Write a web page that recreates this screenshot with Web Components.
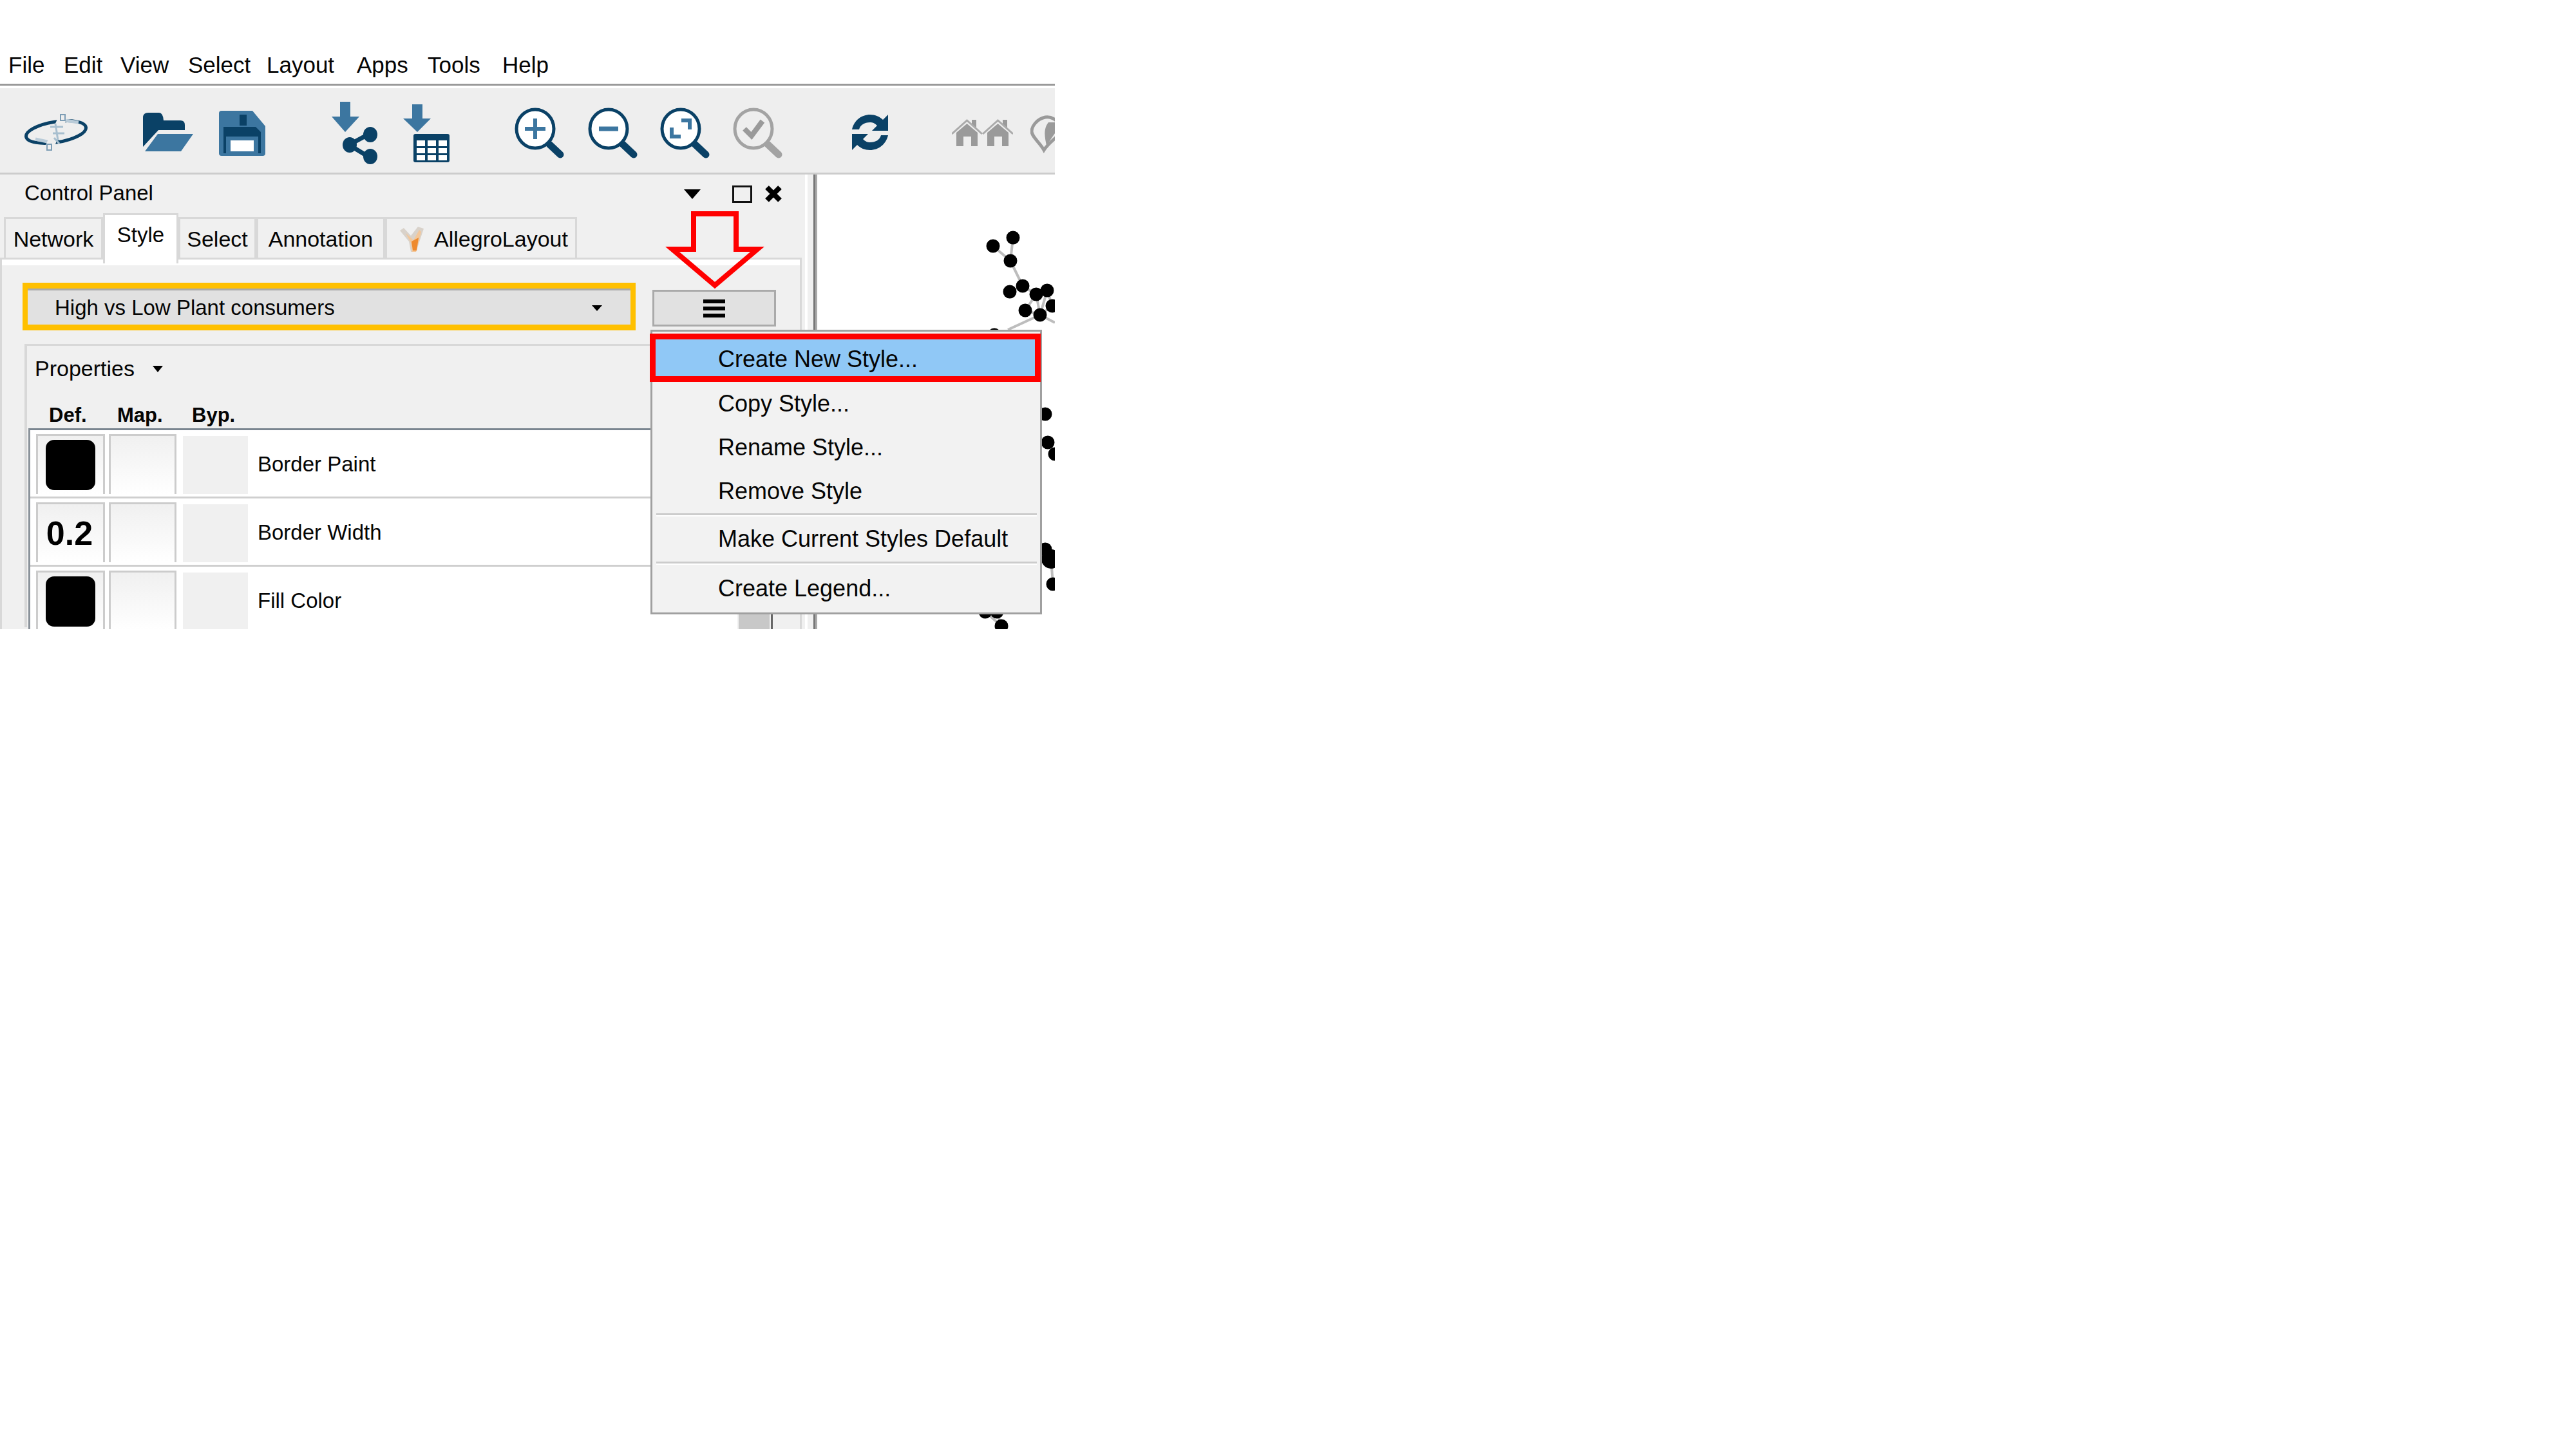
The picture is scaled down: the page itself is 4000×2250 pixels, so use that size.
<!DOCTYPE html>
<html><head><meta charset="utf-8"><title>Cytoscape Style menu</title>
<style>html,body{margin:0;padding:0;background:#fff}</style></head>
<body>
<cy-app>
  <cy-menubar>
    <cy-menu-label style="width:86px">File</cy-menu-label>
    <cy-menu-label style="width:88px">Edit</cy-menu-label>
    <cy-menu-label style="width:105px">View</cy-menu-label>
    <cy-menu-label style="width:122px">Select</cy-menu-label>
    <cy-menu-label style="width:140px">Layout</cy-menu-label>
    <cy-menu-label style="width:110px">Apps</cy-menu-label>
    <cy-menu-label style="width:116px">Tools</cy-menu-label>
    <cy-menu-label style="width:90px">Help</cy-menu-label>
  </cy-menubar>
  <cy-toolbar></cy-toolbar>
  <cy-main>
    <cy-control-panel>
      <cy-panel-title>Control Panel</cy-panel-title>
      <cy-tabs>
        <cy-tab style="width:154px">Network</cy-tab>
        <cy-tab active style="width:117px">Style</cy-tab>
        <cy-tab style="width:121px">Select</cy-tab>
        <cy-tab style="width:200px">Annotation</cy-tab>
        <cy-tab allegro style="width:298px">AllegroLayout</cy-tab>
      </cy-tabs>
      <cy-style-pane>
        <cy-style-picker>High vs Low Plant consumers</cy-style-picker>
        <cy-props>
          <cy-prop-row swatch>Border Paint</cy-prop-row>
          <cy-prop-row value="0.2">Border Width</cy-prop-row>
          <cy-prop-row swatch>Fill Color</cy-prop-row>
        </cy-props>
      </cy-style-pane>
    </cy-control-panel>
    <cy-divider></cy-divider>
    <cy-network></cy-network>
  </cy-main>
  <cy-callout></cy-callout>
  <cy-popup>
    <cy-item selected>Create New Style...</cy-item>
    <cy-item>Copy Style...</cy-item>
    <cy-item>Rename Style...</cy-item>
    <cy-item>Remove Style</cy-item>
    <cy-sep></cy-sep>
    <cy-item h="70">Make Current Styles Default</cy-item>
    <cy-sep></cy-sep>
    <cy-item h="74">Create Legend...</cy-item>
  </cy-popup>
</cy-app>
<script>
const FONT='"Liberation Sans",Arial,sans-serif';
const def=(name,css,html,init)=>customElements.define(name,class extends HTMLElement{
  constructor(){super();this.attachShadow({mode:'open'}).innerHTML='<style>'+css+'</style>'+(typeof html==='function'?html(this):html);}
  connectedCallback(){if(init)init.call(this);}
});
const D='#0a4166',M='#3c76a0',G='#9a9a9a';
const lens=(cx,color,inner)=>`<ellipse cx="${cx}" cy="200" rx="29" ry="30" fill="#fff" stroke="${color}" stroke-width="5"/><line x1="${cx+22}" y1="224" x2="${cx+39}" y2="240" stroke="${color}" stroke-width="11" stroke-linecap="round"/>${inner}`;
const house=x=>`<path d="M${x+7} 206L${x+23.5} 192L${x+40} 206V227H${x+30}V212H${x+18}V227H${x+7}Z" fill="${G}"/><path d="M${x+31} 194V186H${x+38}V201Z" fill="${G}"/><path d="M${x} 208L${x+23.5} 187L${x+47} 208" fill="none" stroke="#aaa" stroke-width="3"/>`;
const refreshHalf=`<path d="M1323 201C1326 187 1338 178 1351 178C1359 178 1366 181 1371 186L1379 178V203H1354L1362 195C1358 191 1355 190 1351 190C1342 190 1336 194 1334 201Z" fill="${D}"/>`;
const TOOLS=[
 [37,138,`<ellipse cx="87" cy="205" rx="47" ry="16" transform="rotate(-9 87 205)" fill="none" stroke="${D}" stroke-width="5"/><path d="M55 216L78 221M102 187L122 190" stroke="#b9cbd8" stroke-width="5" fill="none"/><line x1="98" y1="181" x2="76" y2="230" stroke="#eeeeee" stroke-width="13"/><rect x="94" y="178" width="7" height="9" fill="#eee" stroke="#7d9db5" stroke-width="2"/><rect x="73" y="224" width="7" height="9" fill="#eee" stroke="#7d9db5" stroke-width="2"/><path d="M78 197h20M82 207h18M86 192l4 26M84 214l8 9" stroke="#a8bfcf" stroke-width="3" fill="none"/>`],
 [222,301,`<path d="M222 183Q222 175 230 175H247Q253 175 254 187H280Q287 187 287 194V202H246L222 228Z" fill="${D}"/><path d="M245 208H300L281 235H225Z" fill="${M}"/>`],
 [340,412,`<path d="M344 172H392L412 196V238Q412 242 408 242H344Q340 242 340 238V176Q340 172 344 172Z" fill="${M}"/><rect x="372" y="178" width="11" height="17" fill="${D}"/><path d="M347 197H397L405 205V238H347Z" fill="${D}"/><rect x="351" y="212" width="50" height="30" fill="${M}"/><rect x="358" y="218" width="36" height="17" fill="#fff"/>`],
 [515,590,`<path d="M528 158H544V181H558L536 205L515 181H528Z" fill="${M}"/><path d="M575 207L542 225L575 245" fill="none" stroke="${D}" stroke-width="7"/><ellipse cx="575" cy="209" rx="11" ry="12" fill="${D}"/><ellipse cx="543" cy="225" rx="11" ry="12" fill="${D}"/><ellipse cx="575" cy="243" rx="11" ry="12" fill="${D}"/>`],
 [626,699,`<path d="M640 162H656V184H669L648 205L626 184H640Z" fill="${M}"/><rect x="642" y="208" width="56" height="44" rx="3" fill="${D}"/><g fill="#fff"><rect x="647" y="218" width="13" height="9"/><rect x="664" y="218" width="13" height="9"/><rect x="681" y="218" width="13" height="9"/><rect x="647" y="230" width="13" height="8"/><rect x="664" y="230" width="13" height="8"/><rect x="681" y="230" width="13" height="8"/><rect x="647" y="241" width="13" height="8"/><rect x="664" y="241" width="13" height="8"/><rect x="681" y="241" width="13" height="8"/></g>`],
 [798,876,lens(831,D,`<path d="M815 200H847M831 184V216" stroke="${M}" stroke-width="6"/>`)],
 [912,990,lens(945,D,`<path d="M930 200H960" stroke="${M}" stroke-width="7"/>`)],
 [1024,1103,lens(1057,D,`<path d="M1058 187H1071V201M1043 198V212H1057" fill="none" stroke="${M}" stroke-width="6"/>`)],
 [1137,1215,lens(1170,'#a3a3a3',`<path d="M1156 200L1167 211L1184 188" fill="none" stroke="${G}" stroke-width="8"/>`).replace('fill="#fff"','fill="#eeeeee"')],
 [1323,1379,refreshHalf+`<g transform="rotate(180 1351 205.5)">${refreshHalf}</g>`],
 [1478,1573,house(1478)+house(1526)],
 [1600,1660,`<path d="M1623 182C1609 185 1602 197 1602 204C1602 212 1615 222 1621 233C1628 222 1640 214 1650 204C1648 192 1636 180 1623 182Z" fill="none" stroke="${G}" stroke-width="5"/><path d="M1628 190C1620 200 1622 212 1625 226L1640 204L1640 190Z" fill="${G}"/>`]
];
def('cy-app',`:host{display:flex;flex-direction:column;width:1638px;height:977px;position:relative;overflow:hidden;font:33px ${FONT};color:#050505;background:#fff}`,'<slot></slot>');
def('cy-menubar',`:host{display:flex;box-sizing:border-box;height:137px;padding:81px 0 0 13px;background:#fff;border-bottom:4px solid #fff;box-shadow:inset 0 -3px 0 #999;flex:none}`,'<slot></slot>');
def('cy-menu-label',`:host{display:block;font-size:35px;line-height:40px;white-space:nowrap}`,'<slot></slot>');
def('cy-toolbar',`:host{display:flex;height:131px;background:#eeeeee;border-bottom:3px solid #cccccc;flex:none;overflow:hidden}svg{display:block;flex:none;height:131px}`,()=>{
  let prev=0;return TOOLS.map(([a,b,s])=>{const m=a-prev;prev=b;return `<svg style="margin-left:${m}px" width="${b-a}" viewBox="${a} 137 ${b-a} 131">${s}</svg>`}).join('');
});
def('cy-main',`:host{display:flex;flex:1;min-height:0}`,'<slot></slot>');
def('cy-control-panel',`:host{display:block;width:1263px;flex:none;overflow:hidden;background:linear-gradient(to right,#f0f0f0 1250px,#fff 1250px,#fff 1254px,#f0f0f0 1254px)}`,'<slot></slot>');
def('cy-panel-title',`:host{display:flex;align-items:center;height:60px;padding-left:38px;box-sizing:border-box}
 .t{flex:1;padding-bottom:3px}.i{display:block;flex:none}`,
 `<span class="t"><slot></slot></span>
 <svg class="i" width="26" height="15" viewBox="0 0 26 15" style="margin-right:49px"><path d="M0 0H26L13 15Z" fill="#000"/></svg>
 <svg class="i" width="31" height="27" viewBox="0 0 31 27" style="margin-right:19px"><rect x="1.5" y="1.5" width="28" height="24" fill="none" stroke="#111" stroke-width="3"/></svg>
 <svg class="i" width="28" height="26" viewBox="0 0 28 26" style="margin-right:48px"><path d="M4 3L24 23M24 3L4 23" stroke="#000" stroke-width="8"/></svg>`);
def('cy-tabs',`:host{display:flex;align-items:flex-end;height:69px;padding-left:6px;box-sizing:border-box;position:relative;z-index:1}`,'<slot></slot>');
def('cy-tab',`:host{display:flex;box-sizing:border-box;align-items:center;justify-content:center;height:63px;background:#f0f0f0;border:3px solid #d8d8d8;border-bottom:0;white-space:nowrap;font-size:34px;padding-top:3px}
 :host([active]){height:78px;margin-bottom:-9px;background:#fff;border-bottom:0;padding-bottom:13px;padding-top:0;font-size:33px}
 svg{display:none;margin-right:12px;flex:none}:host([allegro]) svg{display:block}:host([allegro]){padding-left:6px}`,
 `<svg width="44" height="42" viewBox="0 0 44 42"><path d="M3 7L9 3L20 15L31 1L40 4L28 40H20L17 24Z" fill="#d9d2ca"/><path d="M12 11L24 22L33 6L36 9L28 40H22L20 26Z" fill="#f3c79a"/><path d="M21 24L32 18L29 38H23Z" fill="#ee8a2e"/></svg><slot></slot>`);
def('cy-style-pane',`:host{display:block;box-sizing:border-box;width:1245px;height:577px;border:3px solid #d8d8d8;border-bottom:0;background:linear-gradient(#fff 9px,#f0f0f0 9px);padding:36px 0 0 32px;overflow:hidden;position:relative}`,'<slot></slot>');
def('cy-style-picker',`:host{display:flex;align-items:flex-start}
 .combo{box-sizing:border-box;width:952px;height:74px;border:solid #ffc000;border-width:9px 8px;background:#e1e1e1;box-shadow:inset 0 3px 0 #aaa;display:flex;align-items:center;padding-left:42px;white-space:nowrap;padding-top:3px}
 .txt{flex:1}.arrow{width:0;height:0;border:8px solid transparent;border-top:9px solid #000;border-bottom:0;margin-right:44px;margin-top:2px}
 .btn{box-sizing:border-box;width:192px;height:57px;margin:11px 0 0 26px;border:3px solid #aaa;background:#e1e1e1;display:flex;flex-direction:column;align-items:center;justify-content:center;gap:5px}
 .btn i{display:block;width:34px;height:6px;background:#000}`,
 `<div class="combo"><span class="txt"><slot></slot></span><span class="arrow"></span></div><div class="btn"><i></i><i></i><i></i></div>`);
def('cy-props',`:host{display:block;box-sizing:border-box;margin:21px 0 0 3px;width:1200px;height:440px;border-top:3px solid #d8d8d8;border-left:4px solid #d8d8d8;font-size:33px}
 .head{display:flex;align-items:center;height:70px;padding-left:12px;box-sizing:border-box}
 .head b{font-weight:normal;font-size:34px}
 .tri{width:0;height:0;border:8px solid transparent;border-top:10px solid #000;border-bottom:0;margin-left:28px;margin-top:2px}
 .cols{display:flex;box-sizing:border-box;height:58px;padding:22px 0 0 34px;font-weight:bold;font-size:31px;line-height:32px}
 .cols span{display:block}
 .table{margin-left:2px;width:1156px;border-top:3px solid #7a8590;border-left:3px solid #8a929a;border-right:3px solid #666;display:flex;height:320px;box-sizing:border-box}
 .rows{flex:1;background:#fff;min-width:0}.bar{width:52px;flex:none;background:#f0f0f0;padding:0 2px;box-sizing:border-box}.bar i{display:block;height:100%;background:#c8c8c8}`,
 `<div class="head"><b>Properties</b><span class="tri"></span></div>
 <div class="cols"><span style="width:106px">Def.</span><span style="width:116px">Map.</span><span>Byp.</span></div>
 <div class="table"><div class="rows"><slot></slot></div><div class="bar"><i></i></div></div>`);
def('cy-prop-row',`:host{display:flex;box-sizing:border-box;height:106px;padding:6px 0 4px 9px;border-bottom:3px solid #cfcfcf;align-items:stretch;font-size:33px}
 .c{box-sizing:border-box;height:93px;flex:none;display:flex;align-items:center;justify-content:center}
 .b{border:3px solid #cccccc;border-bottom:0;background:linear-gradient(#f0f0f0,#fff)}
 .d{width:107px;margin-right:6px}.m{width:105px;margin-right:10px}.y{width:101px;background:linear-gradient(#fff 3px,#f0f0f0 3px);margin-right:15px}
 .s{display:block;width:77px;height:78px;background:#000;border-radius:13px}
 .v{font:bold 52px/1 ${FONT};color:#000;margin-right:3px}.l{align-self:center;white-space:nowrap}`,
 h=>{const val=h.getAttribute('value');return `<div class="c b d">${val?`<span class="v">${val}</span>`:'<span class="s"></span>'}</div><div class="c b m"></div><div class="c y"></div><span class="l"><slot></slot></span>`});
def('cy-divider',`:host{display:block;width:6px;flex:none;background:linear-gradient(to right,#777 3px,#aaa 3px)}`,'');
const NODES=[[1542,382],[1573,369],[1569,405],[1588,444],[1568,453],[1609,457],[1626,451],[1634,475],[1592,482],[1615,489],[1623,643],[1627,687],[1638,705],[1623,853],[1632,868],[1635,907],[1555,972],[1530,950],[1548,950],[1544,520]];
const EDGES=[[0,2],[1,2],[2,3],[3,5],[4,3],[5,6],[5,9],[6,9],[6,7],[8,9],[8,5],[7,9],[11,12],[14,15],[16,17],[16,18]];
def('cy-network',`:host{display:block;flex:1;min-width:0;overflow:hidden;background:#fff}svg{display:block}`,
 ()=>`<svg width="369" height="706" viewBox="1269 271 369 706"><g stroke="#bdbdbd" stroke-width="4">${EDGES.map(([a,b])=>`<line x1="${NODES[a][0]}" y1="${NODES[a][1]}" x2="${NODES[b][0]}" y2="${NODES[b][1]}"/>`).join('')}<line x1="1615" y1="489" x2="1565" y2="512"/><line x1="1615" y1="489" x2="1638" y2="501"/></g><g fill="#000">${NODES.map(([x,y],i)=>`<circle cx="${x}" cy="${y}" r="${i==14?15:10.5}"/>`).join('')}</g></svg>`);
def('cy-callout',`:host{display:block;position:absolute;left:1028px;top:322px;width:165px;height:132px;z-index:3}svg{display:block}`,
 `<svg width="165" height="132" viewBox="1028 322 165 132"><path d="M1077 332H1143V387H1176L1110 443L1044 387H1077Z" fill="none" stroke="#ff0000" stroke-width="8" stroke-miterlimit="10"/></svg>`);
def('cy-popup',`:host{display:block;position:absolute;left:1010px;top:512px;width:608px;height:442px;box-sizing:border-box;border:3px solid #a0a0a0;background:#f2f2f2;padding-top:3px;z-index:4;font-size:36px}`,'<slot></slot>');
def('cy-item',`:host{display:flex;box-sizing:border-box;height:68px;align-items:center;padding-left:102px;white-space:nowrap}
 :host([selected]){height:75px;width:607px;margin-left:-4px;border:9px solid #ff0000;background:#90c8f6;padding:5px 0 0 97px}`,
 h=>{const a=h.getAttribute('h');return (a?`<style>:host{height:${a}px}</style>`:'')+'<slot></slot>'});
def('cy-sep',`:host{display:block;height:3px;margin:0 5px 2px 6px;background:#cccccc;box-shadow:0 2px 0 #fff}`,'');
</script>
</body></html>
